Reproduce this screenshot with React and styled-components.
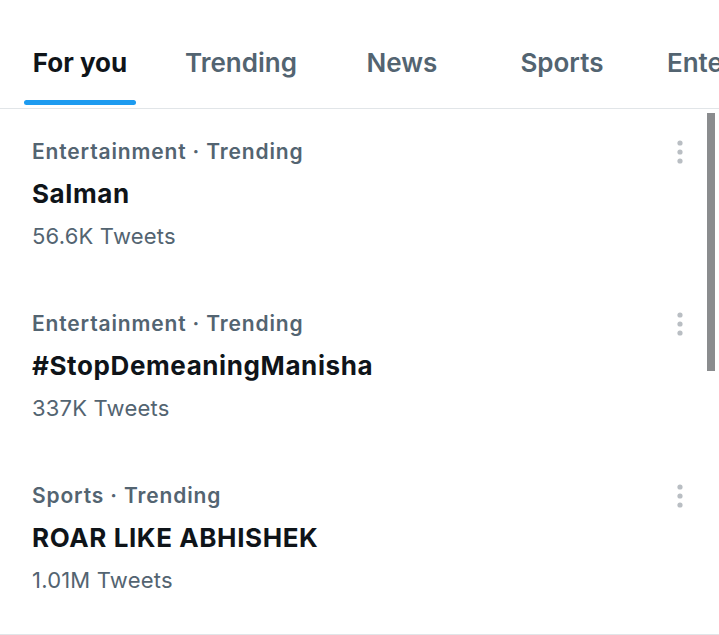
import React from 'react';
import styled, { createGlobalStyle } from 'styled-components';

const GlobalStyle = createGlobalStyle`
  body {
    margin: 0;
    background: #ffffff;
    font-family: Inter, 'Noto Sans', sans-serif;
    color: #0f1419;
  }
`;

const tabs = ['For you', 'Trending', 'News', 'Sports', 'Entertainment'];

const trends = [
  { category: 'Entertainment · Trending', title: 'Salman', count: '56.6K Tweets' },
  { category: 'Entertainment · Trending', title: '#StopDemeaningManisha', count: '337K Tweets' },
  { category: 'Sports · Trending', title: 'ROAR LIKE ABHISHEK', count: '1.01M Tweets' },
];

const MoreIcon = () => (
  <svg width="8" height="26" viewBox="0 0 8 26">
    <circle cx="4" cy="4" r="2.6" fill="#b9bec3" />
    <circle cx="4" cy="13" r="2.6" fill="#b9bec3" />
    <circle cx="4" cy="22" r="2.6" fill="#b9bec3" />
  </svg>
);

const App = () => {
  return (
    <Root>
      <GlobalStyle />
      <TabBar>
        {tabs.map((t, i) => (
          <Tab key={t} $active={i === 0}>
            <TabLabel>
              <TabText $active={i === 0}>{t}</TabText>
              <Indicator $active={i === 0} />
            </TabLabel>
          </Tab>
        ))}
      </TabBar>
      <List>
        {trends.map((item) => (
          <Trend key={item.title}>
            <TrendBody>
              <Category>{item.category}</Category>
              <Title>{item.title}</Title>
              <Count>{item.count}</Count>
            </TrendBody>
            <More>
              <MoreIcon />
            </More>
          </Trend>
        ))}
      </List>
      <Scrollbar />
    </Root>
  );
};

export default App;

const Root = styled.div`
  position: relative;
  width: 719px;
  height: 635px;
  overflow: hidden;
  background: #fff;
`;

const TabBar = styled.div`
  display: flex;
  height: 108px;
  border-bottom: 1.5px solid #e1e5e8;
  overflow: hidden;
`;

const Tab = styled.div`
  flex: 0 0 auto;
  min-width: 160px;
  padding: 0 16px;
  box-sizing: border-box;
  display: flex;
  justify-content: center;
  align-items: flex-end;
`;

const TabLabel = styled.div`
  display: flex;
  flex-direction: column;
  align-items: stretch;
  padding: 0 9px;
`;

const TabText = styled.span`
  font-size: 26px;
  font-weight: ${(p) => (p.$active ? 700 : 600)};
  color: ${(p) => (p.$active ? '#0f1419' : '#536471')};
  line-height: 32px;
  text-align: center;
  white-space: nowrap;
  margin-bottom: 21px;
`;

const Indicator = styled.div`
  height: 5px;
  border-radius: 3px;
  margin: 0 -9px 3px;
  background: ${(p) => (p.$active ? '#1d9bf0' : 'transparent')};
`;

const List = styled.div`
  display: flex;
  flex-direction: column;
  border-bottom: 1.5px solid #e1e5e8;
  padding-bottom: 9px;
`;

const Trend = styled.div`
  display: flex;
  justify-content: space-between;
  align-items: flex-start;
  padding: 22px 35px 24px 32px;
`;

const TrendBody = styled.div`
  display: flex;
  flex-direction: column;
`;

const Category = styled.div`
  font-size: 21px;
  font-weight: 600;
  letter-spacing: 0.85px;
  line-height: 42px;
  color: #536471;
`;

const Title = styled.div`
  font-size: 26px;
  font-weight: 700;
  letter-spacing: 0.6px;
  line-height: 42px;
  color: #0f1419;
`;

const Count = styled.div`
  font-size: 22px;
  font-weight: 400;
  letter-spacing: 0.2px;
  line-height: 42px;
  color: #536471;
`;

const More = styled.div`
  display: flex;
  padding-top: 8px;
`;

const Scrollbar = styled.div`
  position: absolute;
  top: 113px;
  left: 707px;
  width: 8px;
  height: 258px;
  background: #8a8c8e;
`;
